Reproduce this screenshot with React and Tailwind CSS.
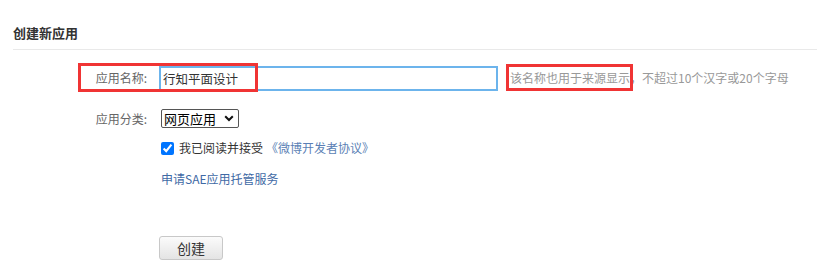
import React from "react";

export default function App() {
  const font = { fontFamily: '"Microsoft YaHei", "Noto Sans CJK SC", "Liberation Sans", sans-serif' };
  return (
    <div className="relative w-[817px] h-[277px] bg-white text-[#333]" style={font}>
      <div className="pl-[13px] pt-[24px]">
        <div className="text-[13px] font-bold leading-[18px] text-[#333]">创建新应用</div>
        <div className="mt-[7px] h-px bg-[#e9e9e9]" />
      </div>

      <div className="flex flex-col mt-[16px]">
        <div className="flex items-center h-[24px]">
          <div className="w-[147px] pr-0 text-right text-[12px] text-[#666]">应用名称:</div>
          <input
            defaultValue="行知平面设计"
            className="ml-[12px] w-[339px] h-[25px] border-[2.5px] border-[#6cb4ec] px-[2px] text-[12.5px] text-[#333] outline-none"
          />
          <div className="ml-[12px] text-[12px] text-[#999] whitespace-nowrap">该名称也用于来源显示，不超过10个汉字或20个字母</div>
        </div>

        <div className="flex items-center mt-[19px] h-[19px]">
          <div className="w-[147px] text-right text-[12px] text-[#666]">应用分类:</div>
          <div
            role="combobox"
            className="ml-[14px] h-[19px] w-[78px] flex items-center justify-between border border-[#555] rounded-[2px] pl-[2px] pr-[4px] text-[13px] leading-none text-black"
          >
            <span>网页应用</span>
            <svg width="10" height="7" viewBox="0 0 10 7">
              <path d="M1.2 1.2 L5 5 L8.8 1.2" fill="none" stroke="#111" strokeWidth="2" />
            </svg>
          </div>
        </div>

        <div className="flex items-center mt-[13px] h-[14px] pl-[161px]">
          <input type="checkbox" defaultChecked className="m-0 w-[13px] h-[13px]" />
          <span className="ml-[5px] text-[12px] text-[#333]">我已阅读并接受</span>
          <span className="ml-[3px] text-[12px] text-[#5b7fb5]">《微博开发者协议》</span>
        </div>

        <div className="mt-[17px] pl-[161px] text-[12px] leading-[14px] text-[#3f6aa5]">申请SAE应用托管服务</div>

        <div className="mt-[49px] pl-[159px]">
          <button className="w-[64px] h-[24px] border border-[#c8c8c8] rounded-[3px] bg-gradient-to-b from-[#fbfbfb] to-[#e4e4e4] text-[14px] text-[#333] leading-none">
            创建
          </button>
        </div>
      </div>

      <div className="absolute left-[78px] top-[63px] w-[180px] h-[29px] border-[3px] border-[#f03434] pointer-events-none" />
      <div className="absolute left-[506px] top-[64px] w-[127px] h-[27px] border-[3px] border-[#f03434] pointer-events-none" />
    </div>
  );
}
